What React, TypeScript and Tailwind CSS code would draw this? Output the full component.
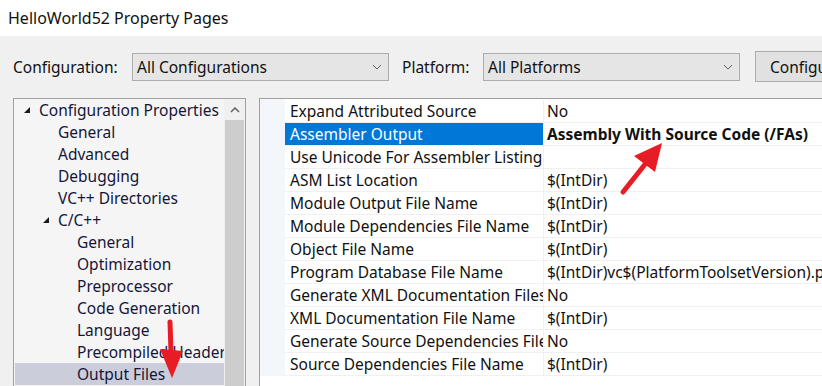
import React from "react";

const tree = [
  { label: "Configuration Properties", indent: 0, arrow: true },
  { label: "General", indent: 1 },
  { label: "Advanced", indent: 1 },
  { label: "Debugging", indent: 1 },
  { label: "VC++ Directories", indent: 1 },
  { label: "C/C++", indent: 1, arrow: true },
  { label: "General", indent: 2 },
  { label: "Optimization", indent: 2 },
  { label: "Preprocessor", indent: 2 },
  { label: "Code Generation", indent: 2 },
  { label: "Language", indent: 2 },
  { label: "Precompiled Headers", indent: 2 },
  { label: "Output Files", indent: 2, selected: true },
];

const props = [
  ["Expand Attributed Source", "No"],
  ["Assembler Output", "Assembly With Source Code (/FAs)"],
  ["Use Unicode For Assembler Listing", ""],
  ["ASM List Location", "$(IntDir)"],
  ["Module Output File Name", "$(IntDir)"],
  ["Module Dependencies File Name", "$(IntDir)"],
  ["Object File Name", "$(IntDir)"],
  ["Program Database File Name", "$(IntDir)vc$(PlatformToolsetVersion).pdb"],
  ["Generate XML Documentation Files", "No"],
  ["XML Documentation File Name", "$(IntDir)"],
  ["Generate Source Dependencies File", "No"],
  ["Source Dependencies File Name", "$(IntDir)"],
];

function Chevron() {
  return (
    <svg width="10" height="6" viewBox="0 0 10 6" className="shrink-0">
      <path d="M1 1 L5 5 L9 1" fill="none" stroke="#606060" strokeWidth="1" />
    </svg>
  );
}

function Combo({ value }: { value: string }) {
  return (
    <div className="w-[257px] shrink-0 h-[28px] bg-[#e5e5e5] border border-[#adadad] flex items-center justify-between pl-[4px] pr-[6px]">
      <span className="pt-[2px]">{value}</span>
      <Chevron />
    </div>
  );
}

function Tri() {
  return (
    <svg width="8" height="8" viewBox="0 0 8 8" className="shrink-0">
      <path d="M7 1 L7 7 L1 7 Z" fill="#1a1a1a" />
    </svg>
  );
}

export default function App() {
  return (
    <div
      className="relative w-[822px] h-[386px] overflow-hidden flex flex-col text-[15.5px] text-[#111] bg-[#f0f0f0]"
      style={{ fontFamily: '"Noto Sans", "Open Sans", sans-serif' }}
    >
      <div className="h-[36px] bg-white flex items-center pl-[8px] text-[16px] shrink-0">
        HelloWorld52 Property Pages
      </div>

      <div className="flex items-center h-[31px] mt-[15px] shrink-0 whitespace-nowrap">
        <span className="ml-[13px] w-[119px] shrink-0 pt-[2px]">Configuration:</span>
        <Combo value="All Configurations" />
        <span className="ml-[13px] w-[81px] shrink-0 pt-[2px]">Platform:</span>
        <Combo value="All Platforms" />
        <div className="ml-[15px] h-[31px] w-[200px] shrink-0 bg-[#e1e1e1] border border-[#adadad] flex items-center pl-[14px] pt-[2px]">
          Configuration Manager...
        </div>
      </div>

      <div className="flex mt-[16px] flex-1 min-h-0">
        {/* tree */}
        <div className="ml-[13px] w-[233px] shrink-0 border border-[#a0a0a0] border-b-0 bg-[#f5f5f5] flex">
          <div className="flex-1 min-w-0 flex flex-col pl-[1px] overflow-hidden">
            {tree.map((t, i) => (
              <div
                key={i}
                className={
                  "h-[22px] shrink-0 flex items-center whitespace-nowrap overflow-hidden text-[#15153a] " +
                  (t.selected ? "bg-[#cbcdda]" : "")
                }
                style={{ paddingLeft: 8 + t.indent * 19 }}
              >
                <span className="w-[16px] shrink-0 flex items-center">{t.arrow ? <Tri /> : null}</span>
                <span className="shrink-0 pt-[2px]">{t.label}</span>
              </div>
            ))}
          </div>
          <div className="w-[21px] flex flex-col bg-[#f0f0f0] shrink-0">
            <div className="h-[21px] flex items-center justify-center">
              <svg width="10" height="6" viewBox="0 0 10 6">
                <path d="M1 5 L5 1 L9 5" fill="none" stroke="#606060" strokeWidth="1.5" />
              </svg>
            </div>
            <div className="flex-1 mx-[1px] bg-[#cdcdcd]" />
          </div>
        </div>

        {/* property grid */}
        <div className="ml-[13px] flex-1 min-w-0 border-l border-t border-[#a0a0a0] bg-white flex">
          <div className="w-[25px] bg-[#f3f6fb] h-[277px] shrink-0" />
          <div className="flex-1 min-w-0 flex flex-col pt-[1px]">
            {props.map(([name, value], i) => {
              const sel = i === 1;
              return (
                <div key={i} className="h-[23px] flex border-b border-[#f0f0f0] whitespace-nowrap shrink-0">
                  <div
                    className={
                      "w-[258px] shrink-0 overflow-hidden pl-[5px] pt-[2px] flex items-center " +
                      (sel ? "bg-[#0078d7] text-white" : "")
                    }
                  >
                    {name}
                  </div>
                  <div
                    className={
                      "flex-1 min-w-0 border-l border-[#f0f0f0] pl-[3px] pt-[2px] flex items-center overflow-hidden " +
                      (sel ? "font-bold" : "")
                    }
                  >
                    {value}
                  </div>
                </div>
              );
            })}
          </div>
        </div>
      </div>

      <svg className="absolute inset-0 pointer-events-none" width="822" height="386" viewBox="0 0 822 386">
        <line x1="623" y1="192" x2="650" y2="158" stroke="#e81c24" strokeWidth="5" strokeLinecap="round" />
        <path d="M662 143 L634 156 L655 172 Z" fill="#e81c24" />
        <line x1="170" y1="322" x2="171" y2="352" stroke="#e81c24" strokeWidth="5" strokeLinecap="round" />
        <path d="M160 349 L183 351 L172 378 Z" fill="#e81c24" />
      </svg>
    </div>
  );
}
